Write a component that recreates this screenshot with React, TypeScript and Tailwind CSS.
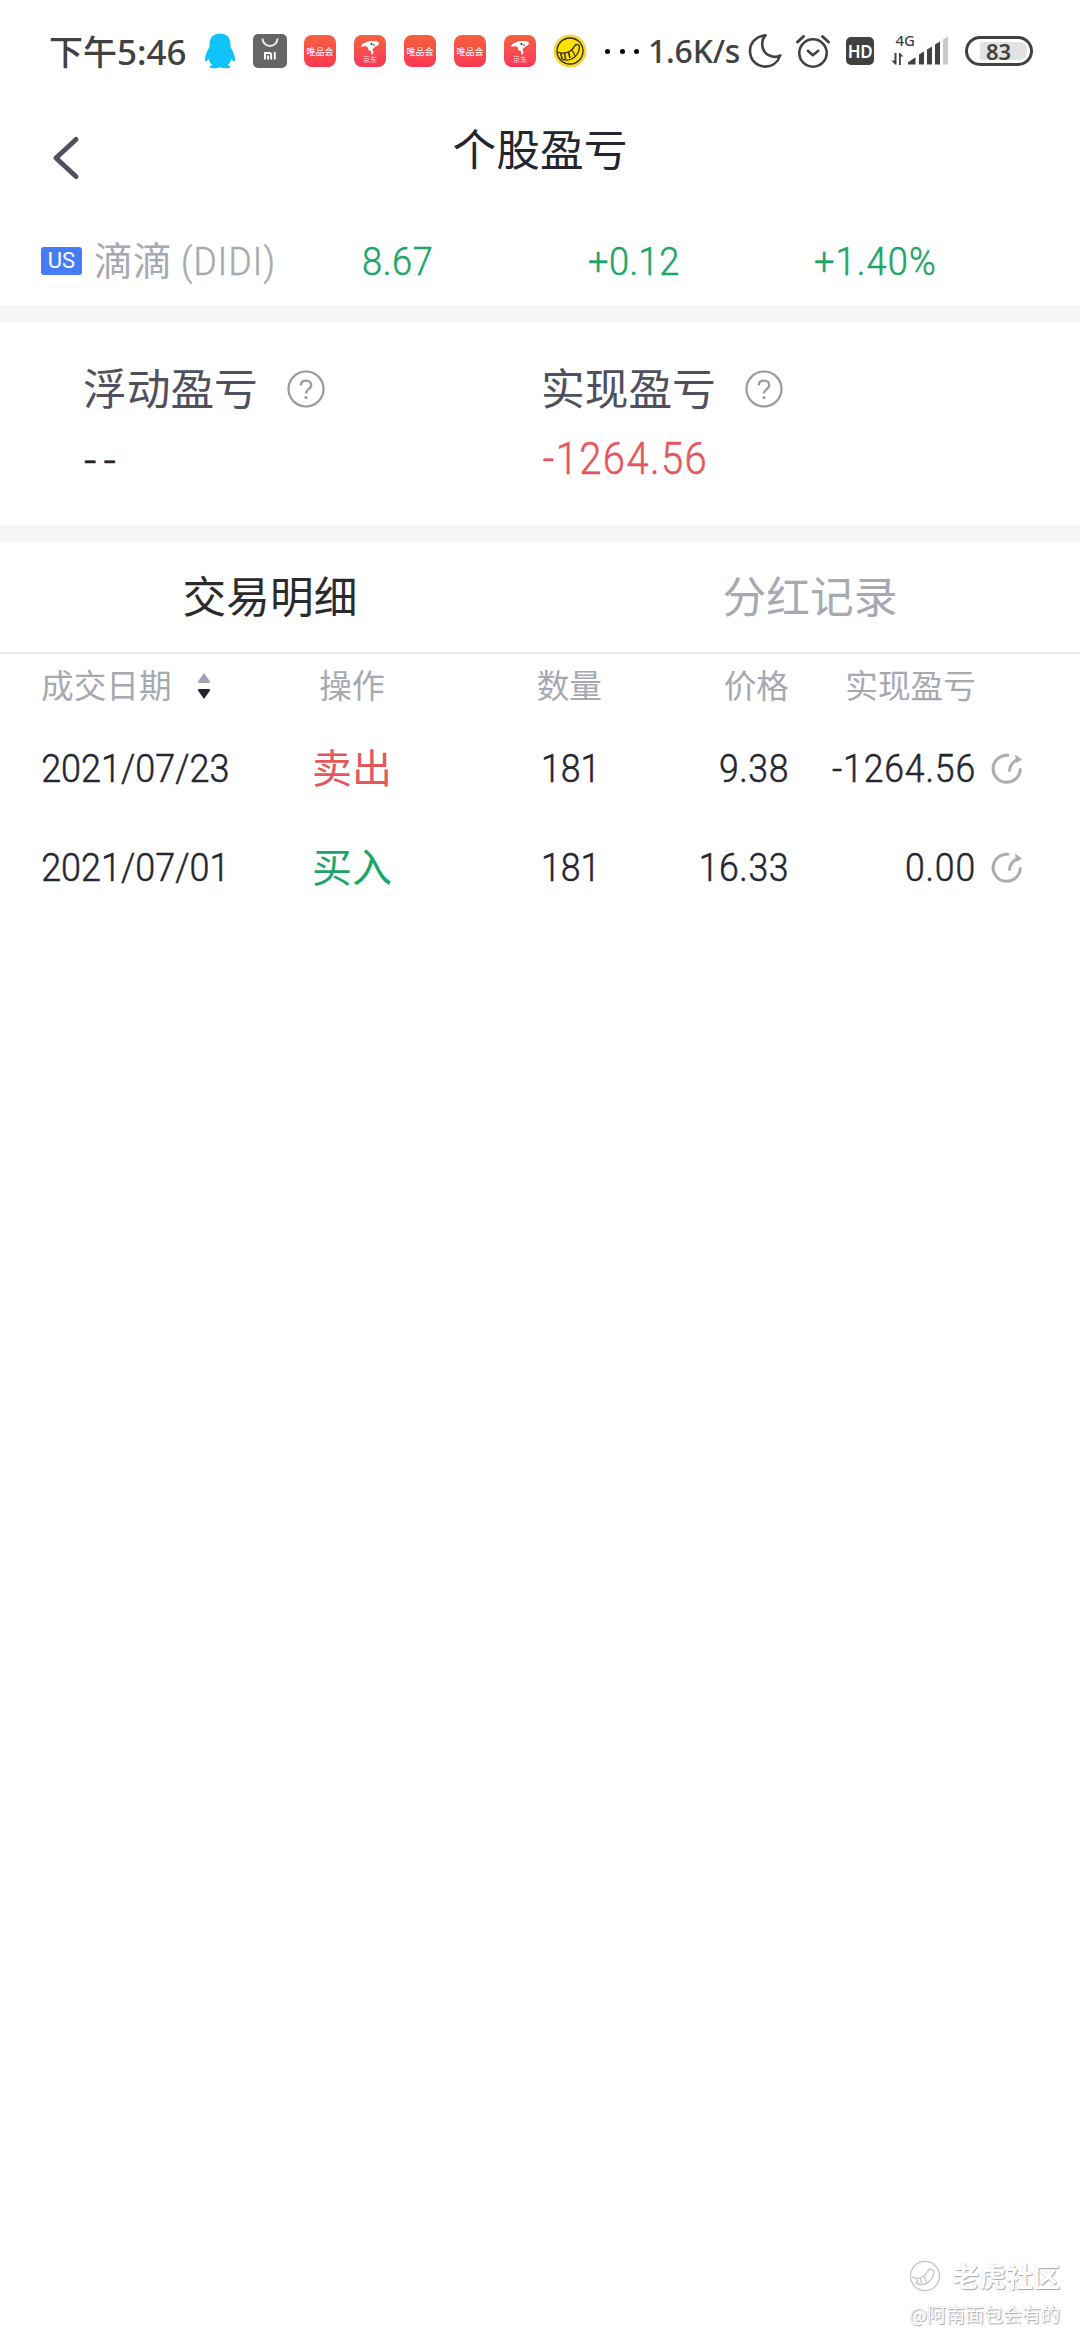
import { ReactNode } from 'react';

interface Trade {
  id: number;
  date: string;
  side: 'sell' | 'buy';
  quantity: string;
  price: string;
  pnl: string;
}

const trades: Trade[] = [
  { id: 1, date: '2021/07/23', side: 'sell', quantity: '181', price: '9.38', pnl: '-1264.56' },
  { id: 2, date: '2021/07/01', side: 'buy', quantity: '181', price: '16.33', pnl: '0.00' },
];

// Narrow figures used for every price, date and amount
function Num({ children, className = '' }: { children: ReactNode; className?: string }) {
  return (
    <span className={`inline-block whitespace-nowrap font-['Roboto'] font-light [-webkit-text-stroke:0.5px_currentColor] ${className}`}>
      {children}
    </span>
  );
}

function PenguinIcon() {
  return (
    <svg width="32" height="36" viewBox="0 0 32 36" fill="#12c3fb">
      <path d="M16 .5C9.500.5 5.500 5 5.500 11v3C3 18 1 22.500 1 26.500c0 2 .8 2.500 1.700 1.700.8-.7 1.300-1.500 1.800-2.400.7 2.700 2 4.700 3.700 6.300-1.700.6-2.700 1.400-2.500 2.200.3 1.500 7.300 1.200 10.300 0 3 1.200 10 1.500 10.300 0 .2-.8-.8-1.600-2.500-2.200 1.700-1.600 3-3.600 3.700-6.300.5.9 1 1.700 1.800 2.400.9.8 1.700.3 1.700-1.700 0-4-2-8.500-4.500-12.500v-3C26.500 5 22.500.5 16 .5Z" />
    </svg>
  );
}

function MiIcon() {
  return (
    <svg width="34" height="34" viewBox="0 0 34 34" fill="none" stroke="#fff">
      <rect width="34" height="34" rx="5" fill="#666" stroke="none" />
      <path d="M9.500 4.500a7.500 7.500 0 0 0 15 0" stroke="#e8e8e8" strokeWidth="2" />
      <path d="M12 25.500v-6.500h4.200q2 0 2 2V25.500M15.100 21.500V25.500M21.800 18V25.500" strokeWidth="1.900" />
    </svg>
  );
}

function VipIcon() {
  return (
    <span className="flex h-8 w-8 items-center justify-center rounded-lg bg-linear-to-b from-[#f5603c] to-[#fb3552]">
      <span className="font-['Noto_Sans_CJK_SC',sans-serif] text-[9px] leading-none text-white">唯品会</span>
    </span>
  );
}

function JdIcon() {
  return (
    <span className="flex h-8 w-8 flex-col items-center rounded-lg bg-linear-to-b from-[#f5603c] to-[#f8355a] pt-[5px]">
      <svg width="20" height="15" viewBox="0 0 20 15">
        <path d="M1 7Q1.500 3 6 2.500Q8 .5 12 1Q18 .5 19 3Q19 5 15.500 6.500Q13.500 8 12.500 9L13.500 13L11.500 15L11 11L8 10Q9 8 7 6.500Q4 6 2.500 6.500Z" fill="#fff" />
        <circle cx="11.500" cy="4" r="1" fill="#222" />
        <circle cx="14" cy="5" r=".8" fill="#222" />
      </svg>
      <span className="mt-px font-['Noto_Sans_CJK_SC',sans-serif] text-[7px] leading-none text-white/80">京东</span>
    </span>
  );
}

function TigerCoinIcon() {
  return (
    <svg width="34" height="34" viewBox="0 0 34 34" fill="none" stroke="#3a2a12">
      <circle cx="17" cy="17" r="16.500" fill="#f0d83c" stroke="none" />
      <circle cx="17" cy="17" r="13" fill="#fbe106" strokeWidth="1.300" />
      <path d="M4.500 18c3 1.500 9 1.500 12-.5 3-1.800 4-3.500 5.500-6 1-1.800 4.500-1 4.500 1.500 0 5-3.500 10.500-9 12.500-3.500 1-7.500.5-9.500-1.500" strokeWidth="1.300" />
      <path d="M7.500 19l1.500 5M11.500 19l1 6M15.500 18l1.500 6" strokeWidth="1.500" />
      <path d="M18.500 16.500q2.500 1 3 5" strokeWidth="1.200" />
    </svg>
  );
}

function MoonIcon() {
  return (
    <svg width="34" height="36" viewBox="0 0 34 36" fill="none" stroke="#414141" strokeWidth="2.600" strokeLinejoin="round">
      <path d="M17.500 2.300C8 3.300 2 9.800 2 18c0 9 6.800 15.600 15.300 15.600 7 0 12.600-4.300 14.900-11.200-2 1.200-4.200 1.700-6.600 1.300-7.900-1-11.400-6.700-11.400-12.900 0-3.300 1.200-6.300 3.300-8.500Z" />
    </svg>
  );
}

function AlarmIcon() {
  return (
    <svg width="36" height="36" viewBox="0 0 36 36" fill="none" stroke="#414141" strokeLinecap="round">
      <circle cx="18" cy="20" r="13.700" strokeWidth="2.600" />
      <path d="M12.800 17.800l5 4.500 5.500-4.500" strokeWidth="2.500" strokeLinejoin="round" />
      <path d="M2.500 9l6-5.500M33.500 9l-6-5.500" strokeWidth="3" />
    </svg>
  );
}

function SignalIcon() {
  return (
    <svg className="overflow-visible" width="58" height="36" viewBox="0 0 58 36" fill="#414141">
      <text x="4.500" y="13" fontSize="15" fontFamily="Noto Sans, sans-serif" fontWeight="500">4G</text>
      <path d="M3.500 20h2v11.500h-1.500L.5 27.500h3ZM8 32h1.800v-8.500h2.700L9 20H8Z" />
      <path d="M17 31.500v-2.300l7.500-5v7.300ZM28 31.500v-10l5-3v13ZM36 31.500v-15l5-3v18ZM44 31.500v-20l5-3v23Z" />
      <path d="M52 31.500V6.500l5-3v28Z" fill="#c8c8c8" />
    </svg>
  );
}

function StatusBar() {
  return (
    <div className="flex h-[102px] items-center pl-[49px] text-[#414141]">
      <div className="flex w-[155px] items-center font-medium leading-none">
        <span className="font-['Noto_Sans_CJK_SC',sans-serif] text-[34px]">下午</span>
        <span className="font-['Noto_Sans',sans-serif] text-[35px]">5:46</span>
      </div>
      <PenguinIcon />
      <div className="ml-[17px] flex items-center gap-[18px]">
        <MiIcon />
        <div className="-ml-px flex items-center gap-[18px]">
          <VipIcon />
          <JdIcon />
          <VipIcon />
          <VipIcon />
          <JdIcon />
        </div>
        <div className="-ml-px">
          <TigerCoinIcon />
        </div>
      </div>
      <div className="ml-[18px] flex w-[34px] justify-between">
        <span className="h-[5px] w-[5px] rounded-full bg-black" />
        <span className="h-[5px] w-[5px] rounded-full bg-black" />
        <span className="h-[5px] w-[5px] rounded-full bg-black" />
      </div>
      <span className="ml-[9px] w-[100px] whitespace-nowrap font-['Noto_Sans',sans-serif] text-[32px] font-medium leading-none tracking-[-0.2px]">
        1.6K/s
      </span>
      <MoonIcon />
      <div className="ml-[13px]">
        <AlarmIcon />
      </div>
      <span className="ml-[15px] flex h-7 w-7 items-center justify-center rounded-[5px] bg-[#414141] font-['Noto_Sans',sans-serif] text-[17px] font-semibold leading-none tracking-[-0.5px] text-white">
        HD
      </span>
      <div className="ml-[17px]">
        <SignalIcon />
      </div>
      <div className="ml-[16px] flex h-[30px] w-[68px] items-center rounded-full border-[3px] border-[#414141] pl-3">
        <span className="flex h-[18px] w-[47px] items-center rounded-r-[7px] bg-[#e2e2e2] pl-[6px] font-['Noto_Sans',sans-serif] text-[22px] font-semibold leading-none">
          83
        </span>
      </div>
    </div>
  );
}

function Header() {
  return (
    <div className="grid h-[98px] grid-cols-[1fr_auto_1fr] items-center">
      <svg className="ml-[50px] mt-[14px]" width="30" height="46" viewBox="0 0 30 46" fill="none" stroke="#50505f" strokeWidth="5" strokeLinecap="round" strokeLinejoin="round">
        <path d="M26 4.500L6 23L26 41.500" />
      </svg>
      <h1 className="pb-[6px] text-[43.700px] leading-none text-[#25252f]">个股盈亏</h1>
    </div>
  );
}

function QuoteRow() {
  return (
    <div className="flex h-[105px] items-center pl-[41px] pt-[17px] text-[#1ba667]">
      <div className="flex w-[321px] items-center">
        <span className="flex h-7 w-[41px] items-center justify-center rounded-[3px] bg-[#467df5] font-['Roboto'] text-[22px] leading-none text-white">
          US
        </span>
        <span className="ml-[12px] pb-[5px] text-[39px] leading-none text-[#a7a9b2]">滴滴</span>
        <Num className="ml-[9px] origin-left scale-x-[.93] pt-[2px] text-[38px] leading-none tracking-[1.300px] text-[#a7a9b2]">(DIDI)</Num>
      </div>
      <Num className="w-[226px] origin-left scale-x-[.94] pt-[2px] text-[38.500px] leading-none tracking-[0.700px]">8.67</Num>
      <Num className="w-[226px] origin-left scale-x-[.94] pt-[2px] text-[38.500px] leading-none tracking-[0.500px]">+0.12</Num>
      <Num className="origin-left scale-x-[.94] pt-[2px] text-[38.500px] leading-none tracking-[1.200px]">+1.40%</Num>
    </div>
  );
}

function HelpIcon() {
  return (
    <svg width="38" height="38" viewBox="0 0 38 38" fill="none" stroke="#9b9b9b">
      <circle cx="19" cy="19" r="17.500" strokeWidth="2.200" />
      <path d="M13.800 15.500c0-3 2.200-4.800 5.200-4.800s5.200 1.800 5.200 4.500c0 3.800-5.200 4.200-5.200 8.300" strokeWidth="2.300" />
      <circle cx="19" cy="27.500" r="1.600" fill="#9b9b9b" stroke="none" />
    </svg>
  );
}

function SummaryItem({ label, children }: { label: string; children: ReactNode }) {
  return (
    <div>
      <div className="flex h-[50px] items-center gap-[29px]">
        <span className="pb-[5px] text-[43.700px] leading-none text-[#50505f]">{label}</span>
        <HelpIcon />
      </div>
      {children}
    </div>
  );
}

function Summary() {
  return (
    <div className="grid h-[203px] grid-cols-[458px_1fr] pl-[83px] pt-[42px]">
      <SummaryItem label="浮动盈亏">
        <Num className="mt-[26px] origin-left pl-px text-[43.500px] leading-none tracking-[7px] text-[#25252f]">--</Num>
      </SummaryItem>
      <SummaryItem label="实现盈亏">
        <Num className="mt-[24px] origin-left scale-x-[.92] pl-[2px] text-[43.500px] leading-none tracking-[1.500px] text-[#e5575c]">-1264.56</Num>
      </SummaryItem>
    </div>
  );
}

function SortIcon() {
  return (
    <svg width="14" height="28" viewBox="0 0 14 28">
      <path d="M7 1L13 9.500Q13.500 11 12 11H2Q.5 11 1 9.500Z" fill="#a0a2b2" />
      <path d="M7 27L13 18.500Q13.500 17 12 17H2Q.5 17 1 18.500Z" fill="#25252f" />
    </svg>
  );
}

function ShareIcon() {
  return (
    <svg width="32" height="34" viewBox="0 0 32 34" fill="none" stroke="#acacb4" strokeWidth="3">
      <path d="M17 3.200A13.600 13.600 0 1 0 29.300 17.500" strokeLinecap="round" />
      <path d="M18.500 18.500Q19 12 25.500 8" strokeLinecap="round" />
      <path d="M24 2.500L31 7.500L25.500 11Z" fill="#acacb4" stroke="none" />
    </svg>
  );
}

const columns = 'grid grid-cols-[272px_160px_170px_187px_187px_1fr] items-center';

function TradeTable() {
  return (
    <div>
      <div className={`${columns} h-[64px] text-[32.700px] leading-none text-[#a7a9b2]`}>
        <div className="flex items-center gap-[25px] pl-[41px]">
          <span className="pb-[4px]">成交日期</span>
          <SortIcon />
        </div>
        <span className="pb-[3px] text-center">操作</span>
        <span className="pb-[3px] text-right">数量</span>
        <span className="pb-[3px] text-right">价格</span>
        <span className="pb-[3px] text-right">实现盈亏</span>
      </div>
      {trades.map((trade) => (
        <div key={trade.id} className={`${columns} h-[99px] text-[38.500px] leading-none text-[#25252f]`}>
          <Num className="origin-left scale-x-[.935] pl-[44px] pt-[4px]">{trade.date}</Num>
          {trade.side === 'sell' ? (
            <span className="pb-[3px] text-center text-[40px] text-[#e5575c]">卖出</span>
          ) : (
            <span className="pb-[3px] text-center text-[40px] text-[#1ba667]">买入</span>
          )}
          <Num className="origin-right scale-x-[.925] pr-[2px] pt-[4px] text-right">{trade.quantity}</Num>
          <Num className="origin-right scale-x-[.925] pt-[4px] text-right tracking-[0.600px]">{trade.price}</Num>
          <Num className="origin-right scale-x-[.925] pt-[4px] text-right tracking-[0.900px]">{trade.pnl}</Num>
          <div className="pl-[15px] pt-[3px]">
            <ShareIcon />
          </div>
        </div>
      ))}
    </div>
  );
}

function Watermark() {
  return (
    <div className="mt-auto flex flex-col items-end pb-[12px] pr-[20px] text-white [text-shadow:1px_1px_1px_#a4a5ae,0_0_1px_#c8c8d0]">
      <div className="flex items-center gap-[11px]">
        <svg width="32" height="32" viewBox="0 0 34 34" fill="none" stroke="#c4c5cc" strokeWidth="1.400">
          <circle cx="17" cy="17" r="15.500" />
          <path d="M3 18c4 2 9 1.500 12-.5 3-1.800 4-4 5.500-6.500 1.500-2.300 6-1 6 1.500 0 5-3.500 11-9.500 13-4 1.300-8 .5-10-1.500" />
          <path d="M8 19l1.500 5.500M12 19l1.500 6M16 17l2.500 6" />
        </svg>
        <span className="text-[27px] font-bold leading-[38px]">老虎社区</span>
      </div>
      <span className="mt-[5px] text-[19px] leading-[28px]">@阿南面包会有的</span>
    </div>
  );
}

export default function App() {
  return (
    <div className="flex h-[2340px] w-[1080px] flex-col overflow-hidden bg-white font-['Noto_Sans_CJK_SC',sans-serif]">
      <StatusBar />
      <Header />
      <QuoteRow />
      <div className="h-[17px] bg-[#f6f6f8]" />
      <Summary />
      <div className="h-[17px] bg-[#f6f6f8]" />
      <div className="grid h-[112px] grid-cols-2 items-center border-b-2 border-[#e8e8ea] text-center text-[43.700px] leading-none">
        <span className="pb-[5px] text-[#2b2b2e]">交易明细</span>
        <span className="pb-[5px] text-[#a7a9b2]">分红记录</span>
      </div>
      <TradeTable />
      <Watermark />
    </div>
  );
}
